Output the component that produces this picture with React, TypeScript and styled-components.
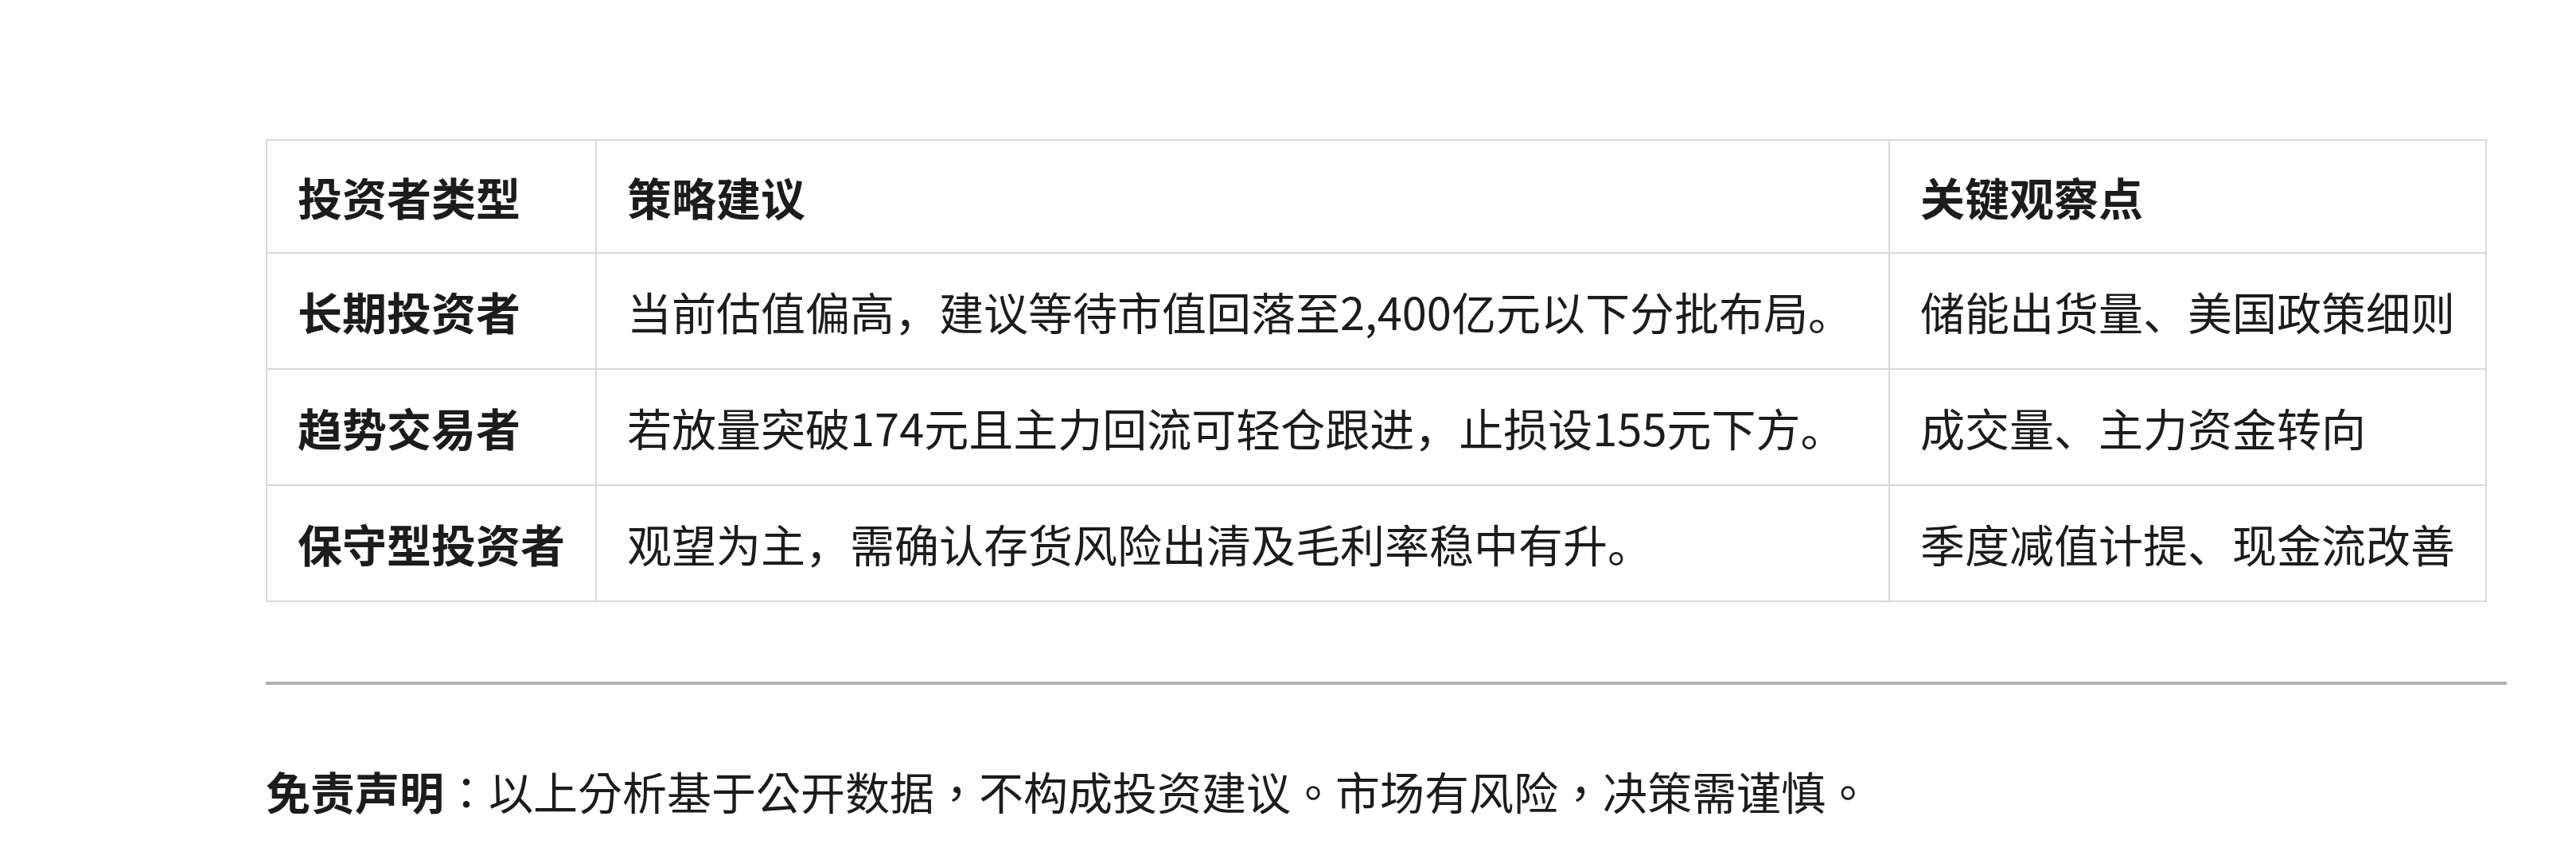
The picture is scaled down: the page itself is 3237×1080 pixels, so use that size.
import React from 'react';
import styled, { createGlobalStyle } from 'styled-components';

const GlobalStyle = createGlobalStyle`
  html, body {
    margin: 0;
    padding: 0;
    background: #ffffff;
  }
  body {
    font-family: 'Noto Sans CJK SC', 'Noto Sans', sans-serif;
    color: #1c1c1c;
  }
`;

const Page = styled.div`
  width: 2816px;
  padding: 175px 0 0 334px;
`;

const Table = styled.table`
  border-collapse: collapse;
  font-size: 56px;
  line-height: 1.5;
`;

const HeadCell = styled.th<{ $width: number }>`
  width: ${p => p.$width}px;
  box-sizing: border-box;
  height: 142px;
  padding: 0 38px;
  border: 2px solid #d9d9d9;
  text-align: left;
  font-weight: 700;
  vertical-align: middle;
`;

const Cell = styled.td<{ $bold?: boolean }>`
  height: 144px;
  padding: 0 38px;
  border: 2px solid #d9d9d9;
  font-weight: ${p => (p.$bold ? 700 : 400)};
  vertical-align: middle;
  white-space: nowrap;
`;

const Rule = styled.hr`
  margin: 100px 0 0;
  border: none;
  height: 4px;
  background: #b0b0b0;
`;

const Disclaimer = styled.p`
  margin: 88px 0 0;
  font-family: 'Noto Sans CJK TC', 'Noto Sans', sans-serif;
  font-size: 56px;
  line-height: 1.6;
  color: #1c1c1c;

  strong {
    font-weight: 700;
  }
`;

const columns = [
  { title: '投资者类型', width: 412 },
  { title: '策略建议', width: 1625 },
  { title: '关键观察点', width: 749 },
];

const rows = [
  ['长期投资者', '当前估值偏高，建议等待市值回落至2,400亿元以下分批布局。', '储能出货量、美国政策细则'],
  ['趋势交易者', '若放量突破174元且主力回流可轻仓跟进，止损设155元下方。', '成交量、主力资金转向'],
  ['保守型投资者', '观望为主，需确认存货风险出清及毛利率稳中有升。', '季度减值计提、现金流改善'],
];

export default function App() {
  return (
    <>
      <GlobalStyle />
      <Page>
        <Table>
          <thead>
            <tr>
              {columns.map(c => (
                <HeadCell key={c.title} $width={c.width}>
                  {c.title}
                </HeadCell>
              ))}
            </tr>
          </thead>
          <tbody>
            {rows.map(r => (
              <tr key={r[0]}>
                <Cell $bold>{r[0]}</Cell>
                <Cell>{r[1]}</Cell>
                <Cell>{r[2]}</Cell>
              </tr>
            ))}
          </tbody>
        </Table>
        <Rule />
        <Disclaimer>
          <strong>免责声明</strong>：以上分析基于公开数据，不构成投资建议。市场有风险，决策需谨慎。
        </Disclaimer>
      </Page>
    </>
  );
}
